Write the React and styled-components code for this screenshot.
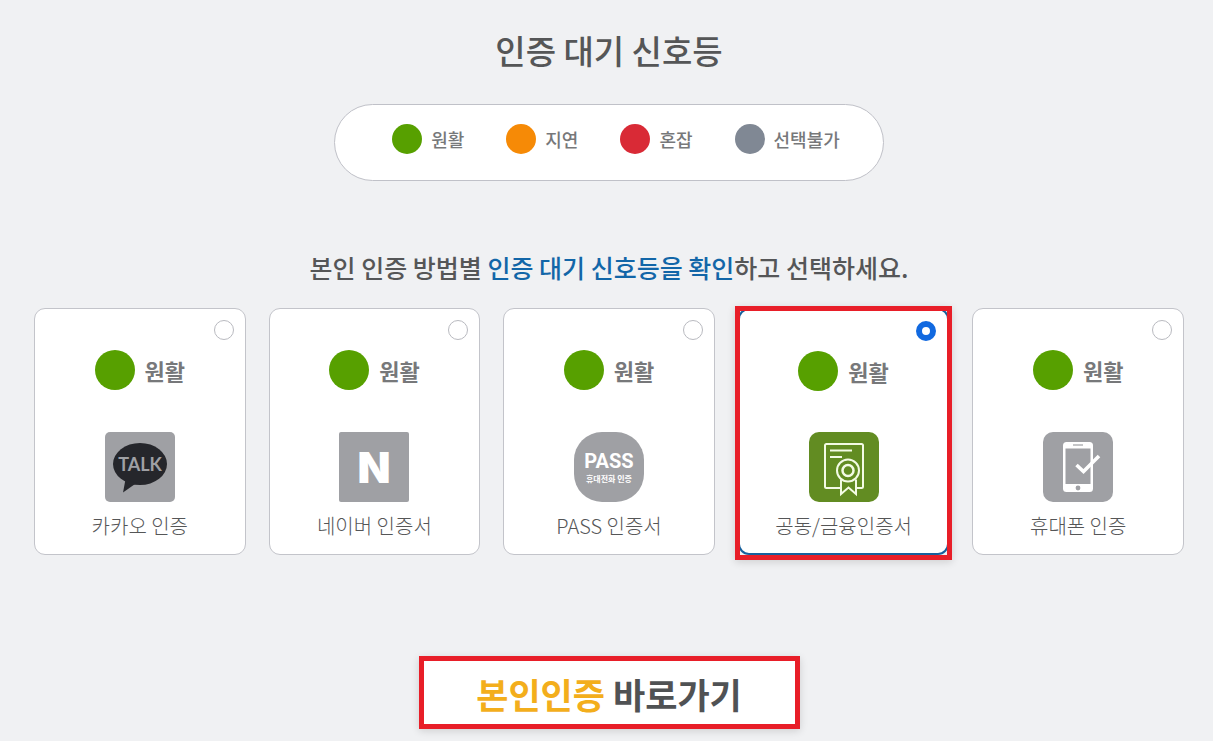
import { useState } from "react";
import styled, { createGlobalStyle, css } from "styled-components";

const signals = {
  smooth: { label: "원활", color: "#57a000" },
  delayed: { label: "지연", color: "#f68a06" },
  crowded: { label: "혼잡", color: "#d92a36" },
  disabled: { label: "선택불가", color: "#808894" },
};

const KakaoIcon = () => (
  <StyledIcon viewBox="0 0 70 70" aria-hidden="true">
    <rect width="70" height="70" rx="5" fill="#9fa0a4" />
    <ellipse cx="35" cy="32" rx="27" ry="21" fill="#25262b" />
    <path d="M20.500 47.500L18 60.500L31.500 51Z" fill="#25262b" />
    <StyledIconText x="35" y="39" size={18} weight={700} fill="#9fa0a4" family="Lato">
      TALK
    </StyledIconText>
  </StyledIcon>
);

const NaverIcon = () => (
  <StyledIcon viewBox="0 0 70 70" aria-hidden="true">
    <rect width="70" height="70" rx="2" fill="#9fa0a4" />
    <StyledIconText x="35" y="51" size={43} weight={900} fill="#fff" family="Inter">
      N
    </StyledIconText>
  </StyledIcon>
);

const PassIcon = () => (
  <StyledIcon viewBox="0 0 70 70" aria-hidden="true">
    <rect width="70" height="70" rx="28" fill="#9fa0a4" />
    <StyledIconText x="35" y="36" size={20} weight={700} fill="#fff" family="Roboto">
      PASS
    </StyledIconText>
    <StyledIconText x="35" y="50" size={8} weight={700} fill="#fff" family="Noto Sans CJK KR">
      휴대전화 인증
    </StyledIconText>
  </StyledIcon>
);

const CertificateIcon = () => (
  <StyledIcon viewBox="0 0 70 70" aria-hidden="true">
    <rect width="70" height="70" rx="10" fill="#628c22" />
    <g fill="none" stroke="#f3fbe4" strokeWidth="2">
      <path d="M31 56H17.500Q16 56 16 54.500V13.500Q16 12 17.500 12H52.500Q54 12 54 13.500V54.500Q54 56 52.500 56H47.500" />
      <path d="M21 18.500H43M21 25H33" />
      <circle cx="39" cy="38.500" r="11" />
      <circle cx="39" cy="38.500" r="5.500" strokeWidth="2.500" />
      <path d="M32 47.500V62L39.500 55.500L47 62V47.500" />
    </g>
  </StyledIcon>
);

const PhoneIcon = () => (
  <StyledIcon viewBox="0 0 70 70" aria-hidden="true">
    <rect width="70" height="70" rx="10" fill="#9fa0a4" />
    <rect x="20" y="10" width="30" height="50" rx="3.500" fill="#fff" />
    <rect x="22.500" y="16.500" width="25" height="35.500" fill="#9fa0a4" />
    <path d="M30 13H40" stroke="#9fa0a4" strokeWidth="1.200" />
    <circle cx="35" cy="56" r="2.400" fill="#9fa0a4" />
    <path d="M33.500 33L40.500 39.500L56 24" fill="none" stroke="#fff" strokeWidth="3.600" />
  </StyledIcon>
);

const methods = [
  { value: "kakao", label: "카카오 인증", Icon: KakaoIcon },
  { value: "naver", label: "네이버 인증서", Icon: NaverIcon },
  { value: "pass", label: "PASS 인증서", Icon: PassIcon },
  { value: "cert", label: "공동/금융인증서", Icon: CertificateIcon },
  { value: "phone", label: "휴대폰 인증", Icon: PhoneIcon },
];

const MethodCard = (props) => {
  const { method, selected, handleSelect } = props;
  const { value, label, Icon } = method;

  return (
    <StyledCard $selected={selected}>
      <StyledRadio
        type="radio"
        name="method"
        value={value}
        checked={selected}
        onChange={() => handleSelect(value)}
      />
      <StyledStatus>
        <StyledDot $size={40} $color={signals.smooth.color} />
        {signals.smooth.label}
      </StyledStatus>
      <Icon />
      <StyledCardLabel>{label}</StyledCardLabel>
    </StyledCard>
  );
};

const App = () => {
  const [selected, setSelected] = useState("cert");

  return (
    <>
      <GlobalStyle />
      <StyledPage>
        <StyledTitle>인증 대기 신호등</StyledTitle>

        <StyledLegend>
          {Object.values(signals).map(({ label, color }) => (
            <StyledLegendItem key={label}>
              <StyledDot $size={30} $color={color} />
              {label}
            </StyledLegendItem>
          ))}
        </StyledLegend>

        <StyledGuide>
          본인 인증 방법별 <strong>인증 대기 신호등을 확인</strong>하고 선택하세요.
        </StyledGuide>

        <StyledCards>
          {methods.map((method) => (
            <MethodCard
              key={method.value}
              method={method}
              selected={selected === method.value}
              handleSelect={setSelected}
            />
          ))}
        </StyledCards>

        <StyledSubmit type="button">
          <em>본인인증</em> 바로가기
        </StyledSubmit>
      </StyledPage>
    </>
  );
};

export default App;

const GlobalStyle = createGlobalStyle`
  * {
    box-sizing: border-box;
  }

  body {
    margin: 0;
    background-color: #f0f1f3;
    color: #555657;
    font-family: "Noto Sans CJK KR", sans-serif;
  }
`;

const StyledPage = styled.main`
  padding: 26px 29px 12px 34px;

  display: flex;
  flex-direction: column;
  align-items: center;
`;

const StyledTitle = styled.h1`
  margin: 0 0 30px;
  font-size: 33px;
  font-weight: 500;
  line-height: 48px;
`;

const StyledLegend = styled.ul`
  width: 100%;
  max-width: 550px;
  margin: 0 0 68px;
  padding: 19px 0 26px 14px;
  border: 1px solid #c0c1c8;
  border-radius: 40px;
  list-style: none;

  display: flex;
  justify-content: center;
  flex-wrap: wrap;
  gap: 0 42px;

  background-color: #fff;
`;

const StyledLegendItem = styled.li`
  display: flex;
  align-items: center;
  gap: 9px;

  color: #77787a;
  font-size: 18px;
  font-weight: 500;
  line-height: 30px;
`;

const StyledDot = styled.span`
  width: ${(props) => props.$size}px;
  height: ${(props) => props.$size}px;
  border-radius: 50%;
  flex-shrink: 0;
  background-color: ${(props) => props.$color};
`;

const StyledGuide = styled.p`
  margin: 0 0 23px;
  font-size: 25px;
  font-weight: 500;
  line-height: 36px;

  strong {
    color: #1266a8;
    font-weight: 500;
  }
`;

const StyledCards = styled.div`
  width: 100%;
  display: grid;
  grid-template-columns: repeat(auto-fit, minmax(200px, 1fr));
  gap: 23px;
`;

const StyledStatus = styled.span`
  margin-bottom: 42px;
  display: flex;
  align-items: center;
  gap: 10px;

  color: #77787a;
  font-size: 22px;
  font-weight: 700;
  line-height: 40px;
`;

const StyledCard = styled.label`
  position: relative;
  padding: 41px 0 13px;
  border: 1px solid #c3c4ca;
  border-radius: 11px;

  display: flex;
  flex-direction: column;
  align-items: center;

  background-color: #fff;
  cursor: pointer;

  ${(props) =>
    props.$selected &&
    css`
      padding-bottom: 12px;
      border: 2px solid #17609c;

      ${StyledStatus} {
        margin-bottom: 41px;
      }

      &::after {
        content: "";
        position: absolute;
        inset: -4px -5px -7px;
        border: 5px solid #e81e28;
        box-shadow: 0 2px 8px rgba(0, 0, 0, 0.14);
        pointer-events: none;
      }
    `}
`;

const StyledRadio = styled.input`
  appearance: none;
  position: absolute;
  top: 11px;
  right: 11px;
  width: 20px;
  height: 20px;
  margin: 0;
  border: 1px solid #b9bac0;
  border-radius: 50%;
  background-color: #fff;
  cursor: pointer;

  &:checked {
    border: 6px solid #1169e0;
  }
`;

const StyledIcon = styled.svg`
  width: 70px;
  height: 70px;
  display: block;
`;

const StyledIconText = styled.text.withConfig({
  shouldForwardProp: (prop) => !["size", "weight", "family"].includes(prop),
})`
  font-family: "${(props) => props.family}", sans-serif;
  font-size: ${(props) => props.size}px;
  font-weight: ${(props) => props.weight};
  text-anchor: middle;
`;

const StyledCardLabel = styled.span`
  margin-top: 9px;
  font-size: 20px;
  font-weight: 300;
  line-height: 30px;
`;

const StyledSubmit = styled.button`
  width: 100%;
  max-width: 381px;
  margin-top: 101px;
  padding: 7px 0 4px;
  border: 5px solid #e81e28;

  background-color: #fff;
  box-shadow: 0 2px 8px rgba(0, 0, 0, 0.14);
  color: #505254;
  font-family: inherit;
  font-size: 35px;
  font-weight: 700;
  line-height: 52px;
  cursor: pointer;

  em {
    color: #f3ae1c;
    font-style: normal;
  }
`;
